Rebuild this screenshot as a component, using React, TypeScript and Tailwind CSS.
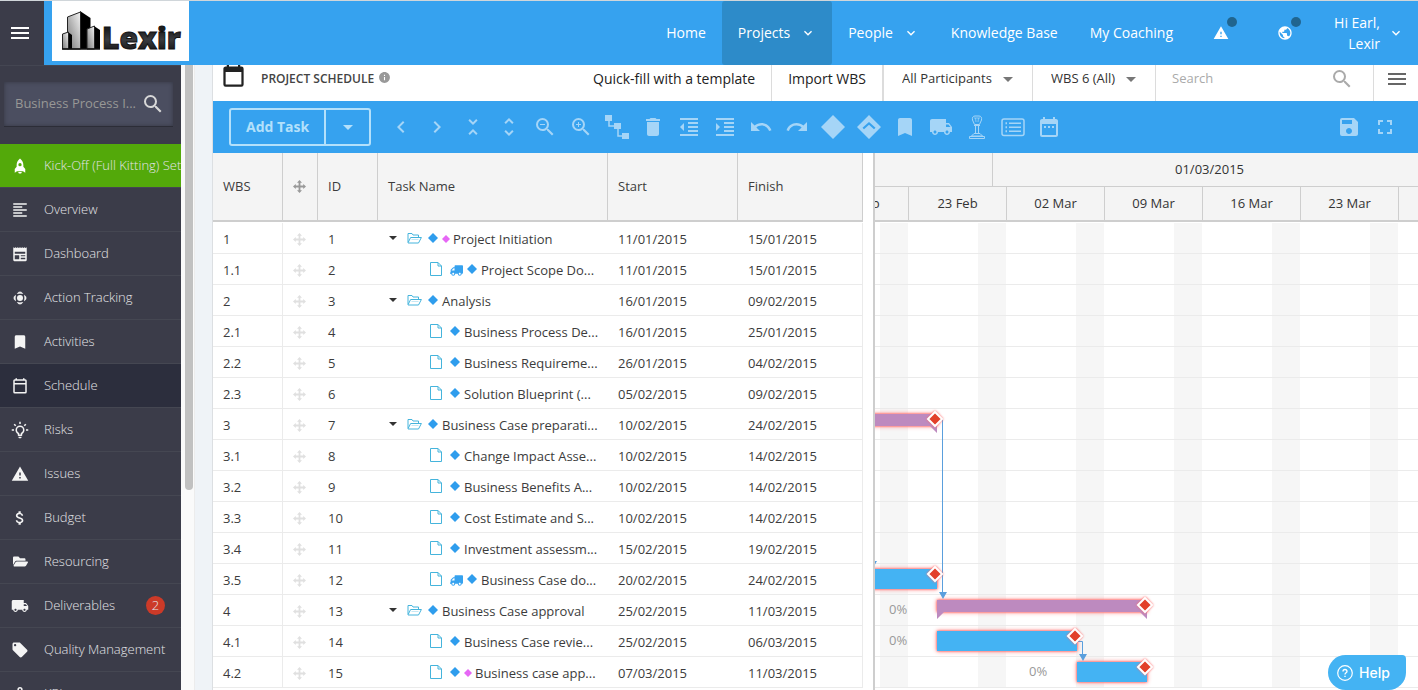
import { useState, type ReactNode } from 'react';
import {
  MdAttachMoney,
  MdBookmark,
  MdChevronLeft,
  MdChevronRight,
  MdDateRange,
  MdDelete,
  MdFormatAlignLeft,
  MdFormatIndentDecrease,
  MdFormatIndentIncrease,
  MdFullscreen,
  MdInfo,
  MdKeyboardArrowDown,
  MdLocalOffer,
  MdLocalShipping,
  MdMenu,
  MdPublic,
  MdRedo,
  MdSave,
  MdSearch,
  MdUndo,
  MdUnfoldLess,
  MdUnfoldMore,
  MdWarning,
  MdZoomIn,
  MdZoomOut,
} from 'react-icons/md';
import { FaFolderOpen, FaTruck } from 'react-icons/fa';

type IconProps = { className?: string };

const CalendarIcon = ({ className }: IconProps) => (
  <svg viewBox="0 0 24 24" fill="currentColor" className={className}>
    <path d="M19 19H5V8h14m-3-7v2H8V1H6v2H5c-1.11 0-2 .89-2 2v14a2 2 0 0 0 2 2h14a2 2 0 0 0 2-2V5a2 2 0 0 0-2-2h-1V1" />
  </svg>
);

const CalendarLineIcon = ({ className }: IconProps) => (
  <svg viewBox="0 0 24 24" fill="none" stroke="currentColor" strokeWidth="2" className={className}>
    <rect x="4" y="4" width="16" height="17" rx="1" />
    <path d="M4 9h16M7 1.500V4M17 1.500V4" />
  </svg>
);

const RocketIcon = ({ className }: IconProps) => (
  <svg viewBox="0 0 24 24" fill="currentColor" className={className}>
    <path fillRule="evenodd" d="M12 2c-3 2.400-4.500 5.500-4.500 9v2L5 16v5l3-2h8l3 2v-5l-2.500-3v-2c0-3.500-1.500-6.600-4.500-9zm0 6a2.200 2.200 0 1 1 0 4.400A2.200 2.200 0 0 1 12 8zM9.500 20h5l-1 2h-3z" />
  </svg>
);

const PanelIcon = ({ className }: IconProps) => (
  <svg viewBox="0 0 24 24" fill="currentColor" className={className}>
    <path fillRule="evenodd" d="M3 3l1.500 1L6 3l1.500 1L9 3l1.500 1L12 3l1.500 1L15 3l1.500 1L18 3l1.500 1L21 3v17a1.500 1.500 0 0 1-1.500 1.500h-15A1.500 1.500 0 0 1 3 20zm2 6v2.500h14V9zm0 4.500V19h6v-5.500zm8 0V15h6v-1.500zm0 3.500v2h6v-2z" />
  </svg>
);

const TargetIcon = ({ className }: IconProps) => (
  <svg viewBox="0 0 24 24" fill="currentColor" className={className}>
    <circle cx="12" cy="12" r="4" />
    <path d="M8.500 6a4 4 0 0 1 7 0L12 5.500zM8.500 18a4 4 0 0 0 7 0l-3.500.5zM6 8.500a4 4 0 0 0 0 7L5.500 12zM18 8.500a4 4 0 0 1 0 7l.5-3.500z" stroke="currentColor" strokeWidth="1" />
  </svg>
);

const BulbIcon = ({ className }: IconProps) => (
  <svg viewBox="0 0 24 24" fill="currentColor" className={className}>
    <path d="M12 6a6 6 0 0 1 6 6c0 2.220-1.210 4.160-3 5.200V19a1 1 0 0 1-1 1h-4a1 1 0 0 1-1-1v-1.800c-1.790-1.040-3-2.980-3-5.200a6 6 0 0 1 6-6m2 15v1a1 1 0 0 1-1 1h-2a1 1 0 0 1-1-1v-1h4m6-10h3v2h-3v-2M1 11h3v2H1v-2M13 1v3h-2V1h2M4.920 3.500l2.130 2.140-1.420 1.410L3.500 4.930 4.920 3.500m12.030 2.130l2.120-2.130 1.430 1.430-2.130 2.120-1.420-1.420M12 8a4 4 0 0 0-4 4c0 1.860 1.270 3.430 3 3.870V18h2v-2.130c1.730-.44 3-2.010 3-3.870a4 4 0 0 0-4-4z" />
  </svg>
);

const KpiIcon = ({ className }: IconProps) => (
  <svg viewBox="0 0 24 24" fill="none" stroke="currentColor" strokeWidth="2" className={className}>
    <circle cx="12" cy="6" r="2.500" />
    <path d="M12 8.500V13M12 13l-6 5M12 13l6 5" />
    <circle cx="5" cy="19" r="2" />
    <circle cx="19" cy="19" r="2" />
  </svg>
);

const LinkIcon = ({ className }: IconProps) => (
  <svg viewBox="0 0 24 24" fill="currentColor" className={className}>
    <path d="M0 0h7v6H0zM9 8h7v6H9zM17 18h7v6h-7z" />
    <path d="M4 6v5h5M13 14v7h4" fill="none" stroke="currentColor" strokeWidth="1.500" />
  </svg>
);

const MilestoneIcon = ({ className }: IconProps) => (
  <svg viewBox="0 0 24 24" fill="currentColor" className={className}>
    <path d="M12 0l12 12-12 12L0 12z" />
  </svg>
);

const MilestoneUpIcon = ({ className }: IconProps) => (
  <svg viewBox="0 0 24 24" fill="currentColor" className={className}>
    <path fillRule="evenodd" d="M12 0l12 12-12 12L0 12zm0 7L5.500 12.800l1.500 1.500 5-4.500 5 4.500 1.500-1.500z" />
  </svg>
);

const StampIcon = ({ className }: IconProps) => (
  <svg viewBox="0 0 24 24" fill="none" stroke="currentColor" className={className}>
    <path d="M9.500 9.500L7.500 5c-.5-2.500.5-4 2.500-4h4c2 0 3 1.500 2.500 4l-2 4.500z" />
    <path d="M9 3h6M10.500 3l.5 4M13.500 3l-.5 4" opacity="0.700" />
    <path d="M9 10.500h6M10.500 11v7M13.500 11v7" />
    <path d="M9 18.500h6l2.500 2.500h-11zM4.500 23.500v-2h15v2z" />
  </svg>
);

const ListBoxIcon = ({ className }: IconProps) => (
  <svg viewBox="0 0 24 24" fill="none" stroke="currentColor" className={className}>
    <rect x="1" y="4" width="22" height="16.500" rx="2" strokeWidth="1.500" />
    <path d="M8 8.200h12M8 12.200h12M8 16.200h12" strokeWidth="1.500" />
    <path d="M4.500 8.200H6M4.500 12.200H6M4.500 16.200H6" strokeWidth="2" />
  </svg>
);

const MoveIcon = ({ className }: IconProps) => (
  <svg viewBox="0 0 13 13" className={className}>
    <path d="M6.500 2v9M2 6.500h9" stroke="currentColor" strokeWidth="1.800" />
    <path d="M6.500 0l2.500 2.800H4zM6.500 13L9 10.200H4zM0 6.500L2.800 4v5zM13 6.500L10.200 4v5z" fill="currentColor" />
  </svg>
);

const FolderIcon = () => (
  <svg viewBox="0 0 15 12" fill="none" stroke="#45b4dc" strokeLinejoin="round" className="w-[15px] h-3">
    <path d="M1 10.500v-9h4l1 1.500h5.500v2M1 10.800L3.600 5.500h10.800L11.500 11H1.300z" />
    <path d="M4.500 7.500h7" opacity="0.300" />
  </svg>
);

const FileIcon = () => (
  <svg viewBox="0 0 12 14" fill="none" stroke="#45b4dc" className="w-3 h-3.5">
    <path d="M.5.500h7.500l3.500 3.500v9.500H.5zM8 .5V4h3.500" />
  </svg>
);

const Diamond = ({ className }: IconProps) => (
  <svg viewBox="0 0 10 10" fill="currentColor" className={className}>
    <path d="M5 0l5 5-5 5-5-5z" />
  </svg>
);

const Caret = ({ className }: IconProps) => (
  <svg viewBox="0 0 10 5" fill="currentColor" className={className}>
    <path d="M0 0h10L5 5z" />
  </svg>
);

const Logo = () => (
  <svg viewBox="0 0 137 60" className="w-[137px] h-[60px]" role="img" aria-label="Lexir">
    <defs>
      <linearGradient id="wall" x1="0" y1="1" x2="1" y2="0">
        <stop offset="0" stopColor="#777" />
        <stop offset="1" stopColor="#f4f4f4" />
      </linearGradient>
      <linearGradient id="letters" x1="0" y1="0" x2="0" y2="1">
        <stop offset="0.300" stopColor="#1b1c1e" />
        <stop offset="0.550" stopColor="#3a3c40" />
        <stop offset="1" stopColor="#000" />
      </linearGradient>
    </defs>
    <path d="M28 10l10.500 7v31H28z" fill="#000" />
    <path d="M15.500 16l13-5v37h-13z" fill="url(#wall)" stroke="#222" />
    <path d="M16 31l4 3v14h-4z" fill="#000" />
    <path d="M10.500 33l6-2v17h-6z" fill="url(#wall)" stroke="#222" />
    <path d="M42 25l6 4v19h-6z" fill="#000" />
    <path d="M35 28l7.500-3v23H35z" fill="url(#wall)" stroke="#222" />
    <path d="M10 48h38" stroke="#111" strokeWidth="1.500" />
    <text x="50" y="48" fontFamily="'Open Sans'" fontSize="30" fontWeight="800" fill="url(#letters)" stroke="#111" strokeWidth="1">Lexir</text>
  </svg>
);

const sidebarItems = [
  { label: 'Overview', icon: MdFormatAlignLeft },
  { label: 'Dashboard', icon: PanelIcon },
  { label: 'Action Tracking', icon: TargetIcon },
  { label: 'Activities', icon: MdBookmark },
  { label: 'Schedule', icon: CalendarLineIcon },
  { label: 'Risks', icon: BulbIcon },
  { label: 'Issues', icon: MdWarning },
  { label: 'Budget', icon: MdAttachMoney },
  { label: 'Resourcing', icon: FaFolderOpen },
  { label: 'Deliverables', icon: MdLocalShipping, badge: 2 },
  { label: 'Quality Management', icon: MdLocalOffer },
  { label: 'KPI', icon: KpiIcon },
];

const tools = [
  { label: 'Previous', icon: MdChevronLeft },
  { label: 'Next', icon: MdChevronRight },
  { label: 'Collapse all', icon: MdUnfoldLess },
  { label: 'Expand all', icon: MdUnfoldMore },
  { label: 'Zoom out', icon: MdZoomOut },
  { label: 'Zoom in', icon: MdZoomIn },
  { label: 'Link tasks', icon: LinkIcon },
  { label: 'Delete', icon: MdDelete },
  { label: 'Outdent', icon: MdFormatIndentDecrease },
  { label: 'Indent', icon: MdFormatIndentIncrease },
  { label: 'Undo', icon: MdUndo },
  { label: 'Redo', icon: MdRedo },
  { label: 'Milestone', icon: MilestoneIcon },
  { label: 'Key milestone', icon: MilestoneUpIcon },
  { label: 'Bookmark', icon: MdBookmark },
  { label: 'Deliverable', icon: MdLocalShipping },
  { label: 'Approval', icon: StampIcon },
  { label: 'Columns', icon: ListBoxIcon },
  { label: 'Calendar', icon: MdDateRange },
];

type Task = {
  wbs: string;
  name: string;
  start: string;
  finish: string;
  parent?: boolean;
  truck?: boolean;
  pink?: boolean;
};

const tasks: Task[] = [
  { wbs: '1', name: 'Project Initiation', start: '11/01/2015', finish: '15/01/2015', parent: true, pink: true },
  { wbs: '1.1', name: 'Project Scope Do...', start: '11/01/2015', finish: '15/01/2015', truck: true },
  { wbs: '2', name: 'Analysis', start: '16/01/2015', finish: '09/02/2015', parent: true },
  { wbs: '2.1', name: 'Business Process De...', start: '16/01/2015', finish: '25/01/2015' },
  { wbs: '2.2', name: 'Business Requireme...', start: '26/01/2015', finish: '04/02/2015' },
  { wbs: '2.3', name: 'Solution Blueprint (...', start: '05/02/2015', finish: '09/02/2015' },
  { wbs: '3', name: 'Business Case preparati...', start: '10/02/2015', finish: '24/02/2015', parent: true },
  { wbs: '3.1', name: 'Change Impact Asse...', start: '10/02/2015', finish: '14/02/2015' },
  { wbs: '3.2', name: 'Business Benefits A...', start: '10/02/2015', finish: '14/02/2015' },
  { wbs: '3.3', name: 'Cost Estimate and S...', start: '10/02/2015', finish: '14/02/2015' },
  { wbs: '3.4', name: 'Investment assessm...', start: '15/02/2015', finish: '19/02/2015' },
  { wbs: '3.5', name: 'Business Case do...', start: '20/02/2015', finish: '24/02/2015', truck: true },
  { wbs: '4', name: 'Business Case approval', start: '25/02/2015', finish: '11/03/2015', parent: true },
  { wbs: '4.1', name: 'Business Case revie...', start: '25/02/2015', finish: '06/03/2015' },
  { wbs: '4.2', name: 'Business case app...', start: '07/03/2015', finish: '11/03/2015', pink: true },
];

const weeks = ['16 Feb', '23 Feb', '02 Mar', '09 Mar', '16 Mar', '23 Mar', '30 Mar', '06 Apr', '13 Apr'];

const ROW = 31;
const WEEK = 98;

function NavLink({ children, active, menu }: { children: ReactNode; active?: boolean; menu?: boolean }) {
  return (
    <a href="#" className={`flex items-center px-4 h-full rounded-[3px] whitespace-nowrap ${active ? 'bg-[#2d8bc9]' : ''}`}>
      {children}
      {menu && <MdKeyboardArrowDown className="w-4 h-4 ml-2.5" />}
    </a>
  );
}

function Header() {
  return (
    <header className="flex h-[65px] shrink-0 border-t border-[#d0d6da] bg-[#36a2ef] text-sm text-white">
      <button aria-label="Menu" className="w-11 pr-1 bg-[#3b3c49] flex items-center justify-center">
        <MdMenu className="w-6 h-6" />
      </button>
      <a href="#" className="ml-2 h-[60px] bg-white">
        <Logo />
      </a>
      <nav className="ml-auto flex h-full">
        <NavLink>Home</NavLink>
        <NavLink active menu>Projects</NavLink>
        <NavLink menu>People</NavLink>
        <NavLink>Knowledge Base</NavLink>
        <NavLink>My Coaching</NavLink>
      </nav>
      <button aria-label="Alerts" className="relative w-16 flex items-center justify-center">
        <MdWarning className="w-4 h-4" />
        <span className="absolute left-[38px] top-4 w-2.5 h-2.5 rounded-full bg-[#20658f]" />
      </button>
      <button aria-label="Language" className="relative w-16 flex items-center justify-center">
        <MdPublic className="w-4 h-4" />
        <span className="absolute left-[38px] top-4 w-2.5 h-2.5 rounded-full bg-[#20658f]" />
      </button>
      <button className="flex items-center justify-end w-[87px] mr-[14px] gap-2 text-right leading-[21px]">
        <span className="w-14">Hi Earl, Lexir</span>
        <MdKeyboardArrowDown className="w-4 h-4" />
      </button>
    </header>
  );
}

function Sidebar() {
  return (
    <aside className="w-[181px] shrink-0 overflow-hidden bg-[#3b3c49] text-[13px] font-light text-[#e4e4e8]">
      <div className="h-[79px] border-t border-[#444652] pt-4 pl-1 pr-2">
        <label className="flex items-center h-[45px] pl-[11px] pr-2 bg-[#4b4e60] border-b border-[#2c2d37] shadow-[inset_0_0_4px_rgba(0,0,0,0.3)]">
          <input
            aria-label="Project"
            placeholder="Business Process I..."
            className="w-0 flex-1 bg-transparent outline-none font-normal placeholder:text-[#989896]"
          />
          <MdSearch className="w-6 h-6 text-[#d8d8d8]" />
        </label>
      </div>
      <a href="#" className="flex items-center h-11 pl-[11px] bg-[#53a90a] border-b border-[#444652] whitespace-nowrap">
        <RocketIcon className="w-[18px] h-[18px] mr-[15px] shrink-0 text-white" />
        Kick-Off (Full Kitting) Settings
      </a>
      {sidebarItems.map(({ label, icon: Icon, badge }) => (
        <a
          key={label}
          href="#"
          className={`flex items-center h-11 pl-[11px] border-b border-[#454752] whitespace-nowrap ${label === 'Schedule' ? 'bg-[#2c2e3d]' : ''}`}
        >
          <span className="w-[18px] mr-[15px] shrink-0 flex justify-center text-[#f4f4f4]">
            <Icon className={Icon === FaFolderOpen ? 'w-[15px] h-[15px]' : 'w-[18px] h-[18px]'} />
          </span>
          {label}
          {badge && (
            <span className="ml-auto mr-4 w-[19px] h-[19px] rounded-full bg-[#cc3a28] flex items-center justify-center">{badge}</span>
          )}
        </a>
      ))}
    </aside>
  );
}

function TitleBar() {
  return (
    <div className="flex h-9 shrink-0 items-end overflow-hidden bg-white text-[13px] text-[#333]">
      <div className="flex h-11 flex-1 items-center">
        <CalendarIcon className="w-[27px] h-[27px] mb-1.5 ml-[7px] text-[#222]" />
        <h1 className="ml-[14px] text-xs font-semibold text-[#444]">PROJECT SCHEDULE</h1>
        <MdInfo className="w-[13px] h-[13px] ml-1 mb-1 text-[#999]" />
        <button className="ml-auto h-full px-4 text-sm text-[#222] border-r border-[#dcdcdc]">Quick-fill with a template</button>
        <button className="h-full px-4 text-sm text-[#222] border-r-2 border-[#dcdcdc]">Import WBS</button>
        <label className="relative h-full w-[149px] border-r border-[#dcdcdc]">
          <select aria-label="Participants" className="w-full h-full pl-[18px] appearance-none bg-transparent outline-none">
            <option>All Participants</option>
          </select>
          <Caret className="absolute right-[19px] top-5 w-2.5 h-[5px] text-[#777]" />
        </label>
        <label className="relative h-full w-[123px] border-r border-[#dcdcdc]">
          <select aria-label="WBS level" className="w-full h-full pl-[18px] appearance-none bg-transparent outline-none">
            <option>WBS 6 (All)</option>
          </select>
          <Caret className="absolute right-[19px] top-5 w-2.5 h-[5px] text-[#777]" />
        </label>
        <label className="flex h-full w-[218px] items-center border-r border-[#dcdcdc] pl-4 pr-[19px]">
          <input aria-label="Search" placeholder="Search" className="w-0 flex-1 outline-none placeholder:text-[#aaa]" />
          <MdSearch className="w-6 h-6 text-[#aaa]" />
        </label>
        <button aria-label="Options" className="w-11 flex justify-center pl-0.5 text-[#666]">
          <MdMenu className="w-6 h-6" />
        </button>
      </div>
    </div>
  );
}

function Toolbar() {
  return (
    <div className="flex h-[52px] shrink-0 items-center bg-[#36a2ef] pl-4 pr-[15px] text-[#a5d5f7]">
      <div className="flex h-[38px] border-2 border-[#b3e0fb] rounded-[3px] mr-3 text-[#b3e0fb]">
        <button className="px-[15px] text-sm font-bold">Add Task</button>
        <button aria-label="More" className="flex w-[45px] items-center justify-center border-l-2 border-[#b3e0fb]">
          <Caret className="w-2.5 h-[5px]" />
        </button>
      </div>
      {tools.map(({ label, icon: Icon }) => (
        <button key={label} aria-label={label} className="w-9 flex justify-center">
          <Icon className="w-6 h-6" />
        </button>
      ))}
      <button aria-label="Save" className="ml-auto w-9 flex justify-center">
        <MdSave className="w-6 h-6" />
      </button>
      <button aria-label="Full screen" className="w-9 flex justify-center">
        <MdFullscreen className="w-6 h-6" />
      </button>
    </div>
  );
}

function TaskTable() {
  const th = 'border-r border-[#cecece] border-b-2 font-normal px-2.5';
  const td = 'border-b border-[#ebebeb] px-2.5 pt-1';

  return (
    <table className="w-[650px] shrink-0 table-fixed border-separate border-spacing-0 self-start text-left text-[13px] text-[#3c3c3c]">
      <thead>
        <tr className="h-[69px] bg-[#f4f4f4]">
          <th className={`${th} w-[70px]`}>WBS</th>
          <th className={`${th} w-[35px]`} aria-label="Move">
            <MoveIcon className="w-[13px] h-[13px] text-[#999]" />
          </th>
          <th className={`${th} w-[60px]`}>ID</th>
          <th className={`${th} w-[230px]`}>Task Name</th>
          <th className={`${th} w-[130px]`}>Start</th>
          <th className={`${th} w-[125px]`}>Finish</th>
        </tr>
      </thead>
      <tbody className="before:block before:h-px">
        {tasks.map((t, i) => (
          <tr key={t.wbs} className="h-[31px]">
            <td className={`${td} border-r`}>{t.wbs}</td>
            <td className={td}>
              <MoveIcon className="w-[13px] h-[13px] mb-0.5 text-[#e0e0e0]" />
            </td>
            <td className={td}>{i + 1}</td>
            <td className={td}>
              <div className="flex items-center whitespace-nowrap">
                <div className="flex items-center mb-1">
                  {t.parent ? (
                    <>
                      <Caret className="w-2 h-1 ml-px mr-2.5 text-[#333]" />
                      <FolderIcon />
                      <span className="w-1.5" />
                    </>
                  ) : (
                    <span className="pl-[42px] pr-2">
                      <FileIcon />
                    </span>
                  )}
                  {t.truck && <FaTruck className="w-[13px] h-[13px] mr-1 mt-0.5 -scale-x-100 text-[#36a2ef]" />}
                  <Diamond className="w-2.5 h-2.5 mr-1 text-[#2f9ded]" />
                  {t.pink && <Diamond className="w-2 h-2 mr-[3px] mt-0.5 text-[#e667f5]" />}
                </div>
                {t.name}
              </div>
            </td>
            <td className={td}>{t.start}</td>
            <td className={`${td} border-r`}>{t.finish}</td>
          </tr>
        ))}
      </tbody>
    </table>
  );
}

const Flag = ({ x, y }: { x: number; y: number }) => (
  <path
    d={`M${x} ${y - 7}l7 7-7 7-7-7z`}
    fill="#e2402a"
    stroke="#fff"
    strokeWidth="2"
    style={{ filter: 'drop-shadow(0 0 1px #f66)' }}
  />
);

const Glow = ({ children }: { children: ReactNode }) => (
  <g style={{ filter: 'drop-shadow(0 0 1px #f55) drop-shadow(0 0 2px #f88)' }}>{children}</g>
);

function Timeline() {
  return (
    <div className="ml-2.5 flex-1 overflow-hidden border-l-2 border-[#cecece] text-[13px] text-[#333]">
      <div className="flex h-[34px] w-max border-b border-[#cecece] bg-[#f4f4f4]">
        <div className="w-[118px] border-r border-[#cecece]" />
        <div className="w-[434px] flex items-center justify-center border-r border-[#cecece]">01/03/2015</div>
        <div className="w-[420px]" />
      </div>
      <div className="-ml-16 flex h-[35px] w-max border-b-2 border-[#cecece] bg-[#f4f4f4]">
        {weeks.map(w => (
          <div key={w} className="w-[98px] flex items-center justify-center border-r border-[#cecece]">{w}</div>
        ))}
      </div>
      <svg className="w-full h-[467px]">
        {weeks.map((w, i) => (
          <rect key={w} x={5 + i * WEEK} y="1" width="28" height={tasks.length * ROW} fill="#f6f6f6" />
        ))}
        {tasks.map((t, i) => (
          <rect key={t.wbs} y={(i + 1) * ROW} width="100%" height="1" fill="#ebebeb" />
        ))}

        <g transform="translate(0 1)">
          <Glow>
            <path d="M-10 191H62v12H-10z" fill="#bd8abf" />
            <path d="M-10 346H62v20H-10z" fill="#44b3f3" />
            <path d="M62 377h210v12H62z" fill="#bd8abf" />
            <path d="M62 408h140v20H62zM202 439h70v20h-70z" fill="#44b3f3" />
          </Glow>
          <path d="M62 203v7l-7-7zM62 389v7l7-7zM272 389v7l-7-7z" fill="#bd8abf" />
          <path d="M67.500 196v173M203 418.500h4.500V432" fill="none" stroke="#5a9fdd" />
          <path d="M64 369h8l-4 7zM204 431h8l-4 7zM-6 338h8l-4 7z" fill="#5a9fdd" />
          <Flag x={60} y={196} />
          <Flag x={60} y={351} />
          <Flag x={270} y={382} />
          <Flag x={200} y={413} />
          <Flag x={270} y={444} />
          <g fill="#999">
            <text x="14" y="391">0%</text>
            <text x="14" y="422">0%</text>
            <text x="154" y="453">0%</text>
          </g>
        </g>
      </svg>
    </div>
  );
}

export default function App() {
  const [helpOpen, setHelpOpen] = useState(false);

  return (
    <div className="flex h-screen flex-col overflow-hidden bg-[#eff3f7] font-['Open_Sans',sans-serif]">
      <Header />
      <div className="flex min-h-0 flex-1">
        <Sidebar />
        <div className="w-3.5 shrink-0 border-r border-[#ececec] bg-[#fafafa] pl-1">
          <div className="h-[425px] w-2 rounded-b bg-[#c1c1c1]" />
        </div>
        <main className="ml-[17px] flex min-w-0 flex-1 flex-col border-l border-[#dcdfe2] bg-white">
          <TitleBar />
          <Toolbar />
          <div className="flex min-h-0 flex-1 overflow-hidden">
            <TaskTable />
            <Timeline />
          </div>
        </main>
      </div>
      <button
        onClick={() => setHelpOpen(!helpOpen)}
        className="fixed bottom-0 right-3 flex h-[35px] w-[78px] items-center gap-1.5 rounded-[18px] rounded-tr-[4px] bg-[#44b3f3] pl-[9px] font-['Inter',sans-serif] text-sm font-medium text-white"
      >
        <svg viewBox="0 0 16 16" fill="none" stroke="currentColor" className="w-4 h-4">
          <circle cx="8" cy="8" r="7.300" strokeWidth="1.200" />
          <path d="M6 6.500c0-2.700 4-2.700 4 0 0 1.300-2 1.400-2 3" strokeWidth="1.300" />
          <path d="M8 10.700V12" strokeWidth="1.400" />
        </svg>
        Help
      </button>
    </div>
  );
}
